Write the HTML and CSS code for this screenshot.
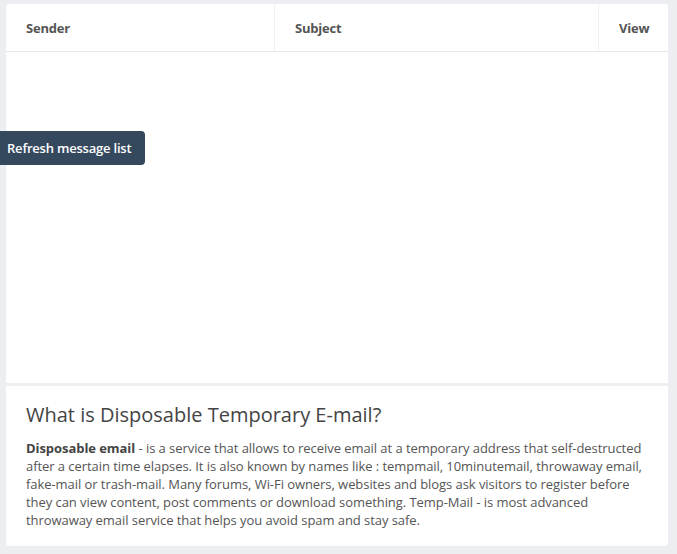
FILE: index.html
```html
<!DOCTYPE html>
<html lang="en">
<head>
    <meta charset="UTF-8">
    <meta name="viewport" content="width=device-width, initial-scale=1.0">
    <title>Temp Mail Inbox</title>
    <link rel="stylesheet" href="styles.css">
</head>
<body>

<div class="page">
    <div class="inbox">
        <div class="inbox-head">
            <div class="col col-sender">Sender</div>
            <div class="col col-subject">Subject</div>
            <div class="col col-view">View</div>
        </div>
        <div class="inbox-body"></div>
        <div class="tooltip">Refresh message list</div>
    </div>

    <div class="about">
        <h2>What is Disposable Temporary E-mail?</h2>
        <p><b>Disposable email</b> - is a service that allows to receive email at a temporary address that self-destructed after a certain time elapses. It is also known by names like : tempmail, 10minutemail, throwaway email, fake-mail or trash-mail. Many forums, Wi-Fi owners, websites and blogs ask visitors to register before they can view content, post comments or download something. Temp-Mail - is most advanced throwaway email service that helps you avoid spam and stay safe.</p>
    </div>
</div>

</body>
</html>
```

FILE: styles.css
```css
body {
    margin: 0;
    font-family: "Open Sans", Arial, sans-serif;
    background-color: #eceef1;
    color: #555;
}
.page {
    padding: 4px 9px 8px 6px;
}
.inbox {
    position: relative;
    background: white;
    border-radius: 3px 3px 0 0;
    height: 379px;
    display: flex;
    flex-direction: column;
}
.inbox-head {
    display: grid;
    grid-template-columns: 268px 1fr 70px;
    height: 47px;
    border-bottom: 1px solid #e6e7ea;
}
.col {
    display: flex;
    align-items: center;
    padding: 0 20px;
    font-size: 13px;
    font-weight: 700;
    color: #555;
    letter-spacing: -0.2px;
}
.col-subject, .col-view {
    border-left: 1px solid #f0f1f3;
}
.inbox-body {
    flex: 1;
}
.tooltip {
    position: absolute;
    left: -6px;
    top: 127px;
    width: 145px;
    height: 34px;
    box-sizing: border-box;
    padding-left: 7px;
    display: flex;
    align-items: center;
    background-color: #34495e;
    color: white;
    font-size: 13px;
    font-weight: 600;
    letter-spacing: -0.2px;
    border-radius: 0 4px 4px 0;
}
.about {
    margin-top: 3px;
    background: white;
    border-radius: 0 0 3px 3px;
    height: 160px;
    box-sizing: border-box;
    padding: 14px 20px 0 20px;
}
.about h2 {
    margin: 0 0 9px 0;
    font-size: 20px;
    font-weight: 400;
    color: #444;
    line-height: 30px;
}
.about p {
    margin: 0;
    font-size: 13px;
    line-height: 18px;
    color: #555;
    letter-spacing: -0.06px;
}
.about b {
    color: #444;
}
```
